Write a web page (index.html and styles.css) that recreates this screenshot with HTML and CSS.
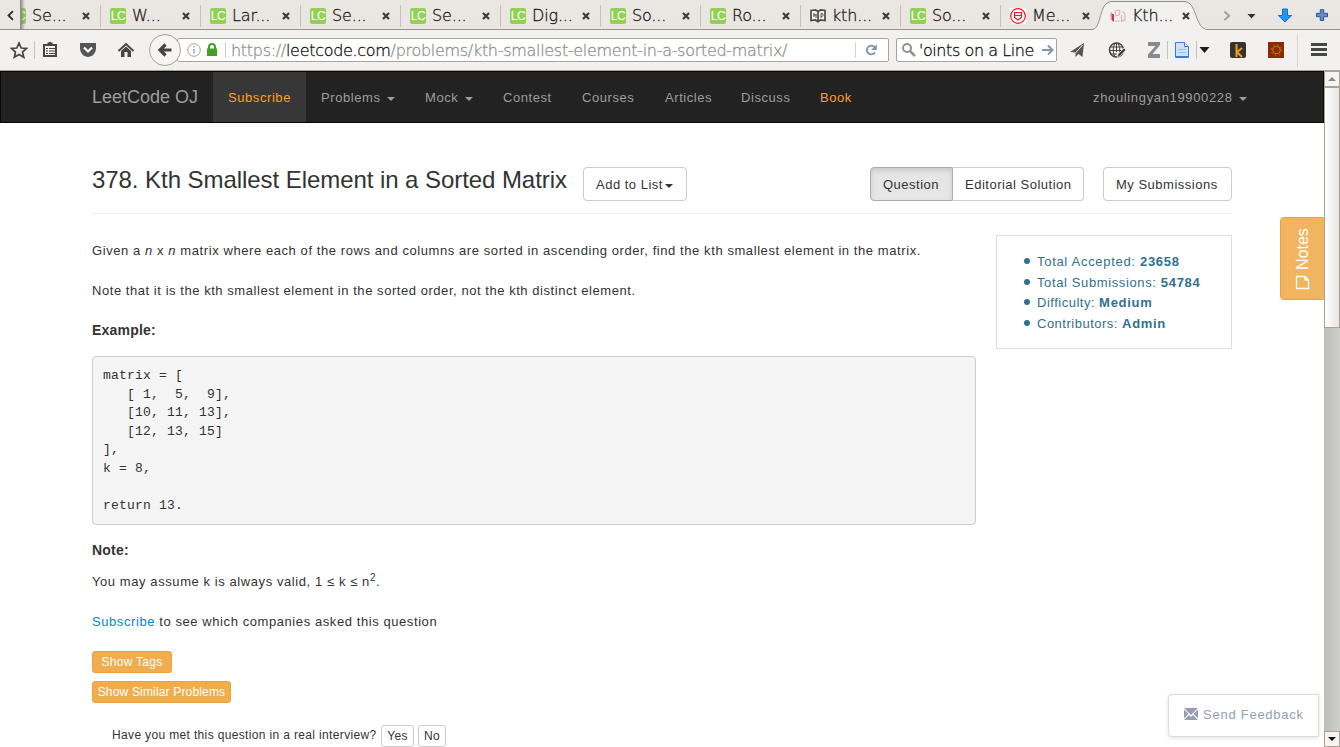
FILE: index.html
```html
<!DOCTYPE html>
<html lang="en">
<head>
<meta charset="utf-8">
<title>Kth Smallest Element in a Sorted Matrix | LeetCode OJ</title>
<link rel="stylesheet" href="styles.css">
</head>
<body>
<div class="browser">
<div class="tabs">
  <div class="tab first"><svg class="scroll-left" viewBox="0 0 20 30"><path d="M12.500 11.500L8 16l4.500 4.500" fill="none" stroke="#2e3436" stroke-width="2"/></svg><span class="shade"></span><i class="lc">LC</i><span class="t">Se...</span><svg class="x" viewBox="0 0 8 8"><path d="M1 1l6 6M7 1L1 7"/></svg></div>
  <div class="tab"><i class="lc">LC</i><span class="t">W...</span><svg class="x" viewBox="0 0 8 8"><path d="M1 1l6 6M7 1L1 7"/></svg></div>
  <div class="tab"><i class="lc">LC</i><span class="t">Lar...</span><svg class="x" viewBox="0 0 8 8"><path d="M1 1l6 6M7 1L1 7"/></svg></div>
  <div class="tab"><i class="lc">LC</i><span class="t">Se...</span><svg class="x" viewBox="0 0 8 8"><path d="M1 1l6 6M7 1L1 7"/></svg></div>
  <div class="tab"><i class="lc">LC</i><span class="t">Se...</span><svg class="x" viewBox="0 0 8 8"><path d="M1 1l6 6M7 1L1 7"/></svg></div>
  <div class="tab"><i class="lc">LC</i><span class="t">Dig...</span><svg class="x" viewBox="0 0 8 8"><path d="M1 1l6 6M7 1L1 7"/></svg></div>
  <div class="tab"><i class="lc">LC</i><span class="t">So...</span><svg class="x" viewBox="0 0 8 8"><path d="M1 1l6 6M7 1L1 7"/></svg></div>
  <div class="tab"><i class="lc">LC</i><span class="t">Ro...</span><svg class="x" viewBox="0 0 8 8"><path d="M1 1l6 6M7 1L1 7"/></svg></div>
  <div class="tab"><svg class="fav" viewBox="0 0 16 16"><path d="M1 2.500l4.500-.5L8 3.500 10.500 2l4.500.5v10L10.500 12 8 13.800 5.500 12 1 12.500zM8 3.500v10" fill="#f4f2ee" stroke="#4a4a4a" stroke-width="1.700"/><path d="M4 5v4M6 6v4M3.500 7h3M11 10V5.500q3 0 2 2t-2 1" fill="none" stroke="#555"/></svg><span class="t">kth...</span><svg class="x" viewBox="0 0 8 8"><path d="M1 1l6 6M7 1L1 7"/></svg></div>
  <div class="tab"><i class="lc">LC</i><span class="t">So...</span><svg class="x" viewBox="0 0 8 8"><path d="M1 1l6 6M7 1L1 7"/></svg></div>
  <div class="tab"><svg class="fav" viewBox="0 0 16 16"><rect width="16" height="16" fill="#fff"/><circle cx="8" cy="8" r="7.300" fill="#fff" stroke="#f5151b" stroke-width="1.200"/><path d="M4.500 4.500h7v5L8 12 4.500 9.500zM4.500 7.500h7" fill="none" stroke="#f5151b" stroke-width="1.200"/></svg><span class="t">Me...</span><svg class="x" viewBox="0 0 8 8"><path d="M1 1l6 6M7 1L1 7"/></svg></div>
  <div class="tab active"><svg class="shape" viewBox="0 0 120 30"><path d="M0 30V29.500C10 29.500 6 2.500 20 2.500H92C106 2.500 102 29.500 116 29.500V30z" fill="#f2f1ef"/><path d="M0 29.500C10 29.500 6 1.500 20 1.500H92C106 1.500 102 29.500 116 29.500" fill="none" stroke="#939388"/></svg><svg class="fav" viewBox="0 0 16 16"><path d="M1 5l3 1.500V14l-2.500-2z" fill="#c9364d"/><path d="M1 4v7M5 4q2-3 5-1l-1 4-3 1zM5 13h5M12 4q3 0 3 4v4q-2 1.500-3.500 1.500V7" fill="none" stroke="#e0b0b5" stroke-width="1.200"/></svg><span class="t">Kth...</span><svg class="x" viewBox="0 0 8 8"><path d="M1 1l6 6M7 1L1 7"/></svg></div>
  <svg class="tabtools" viewBox="1210 0 130 30"><path d="M1224.500 11.500l4.500 4.300-4.500 4.300" fill="none" stroke="#a3a09b" stroke-width="2"/><path d="M1247.500 14h8l-4 4.500z" fill="#2e3436"/><path d="M1282.500 9h5v6.500h4.200L1285 22l-6.700-6.500h4.200z" fill="#1f97f7" stroke="#1470c9"/><path d="M1320.300 9.700h3.400v3.600h3.800v3.400h-3.800v3.800h-3.400v-3.800h-3.800v-3.400h3.800z" fill="#638fc6" stroke="#2b5695"/></svg>
</div>
<div class="toolbar">
  <svg class="left-tools" viewBox="0 31 182 40"><path d="M19 43l2.200 5 5.300.5-4 3.600 1.300 5.200-4.800-2.800-4.700 2.800 1.200-5.200-4-3.600 5.300-.5z" fill="none" stroke="#464646" stroke-width="1.700"/><path d="M34.500 41v18" stroke="#c5c2bd"/><path d="M44 45h12v11H44zM47.500 43.500h5M50 42v2" fill="none" stroke="#464646" stroke-width="2"/><path d="M46 48.500h2M49 48.500h6M46 51h2M49 51h6M46 53.500h2M49 53.500h6" stroke="#464646"/><path d="M80 43h16v6q-1 7-8 8-7-1-8-8z" fill="#565656"/><path d="M84 47.500l4 4 4-4" fill="none" stroke="#fff" stroke-width="2.200"/><path d="M118.500 51l7.500-7 7.500 7" fill="none" stroke="#464646" stroke-width="1.800"/><path d="M121 51l5-4.500 5 4.500v6h-3.500v-5h-3v5H121z" fill="#464646"/></svg>
  <div class="url"><svg class="url-icons" viewBox="0 0 51 24"><circle cx="14" cy="12" r="6.300" fill="none" stroke="#a0a0a0"/><path d="M14 11v4.500M14 8v1.500" stroke="#999" stroke-width="1.300"/><path d="M29 11V9q0-3 3-3t3 3v2" fill="none" stroke="#459f26" stroke-width="2"/><rect x="27" y="10.500" width="10" height="7.500" fill="#459f26"/><path d="M45.500 4v16" stroke="#d0cecb"/></svg><span class="address">https://<b>leetcode.com</b>/problems/kth-smallest-element-in-a-sorted-matrix/</span><svg class="reload" viewBox="0 0 34 24"><path d="M.5 4v16" stroke="#d0cecb"/><path d="M20.500 14.500a4.500 4.500 0 1 1 .5-4" fill="none" stroke="#8296aa" stroke-width="2"/><path d="M22.500 6v6h-6z" fill="#8296aa"/></svg></div>
  <div class="search"><svg class="lens" viewBox="0 0 16 16"><circle cx="6" cy="6" r="4" fill="none" stroke="#929292" stroke-width="2"/><path d="M9 9l5 5" stroke="#929292" stroke-width="2.500"/></svg><span class="query">'oints on a Line</span><svg class="go" viewBox="0 0 14 14"><path d="M1 7h10M7 2.500L11.500 7 7 11.500" fill="none" stroke="#8296aa" stroke-width="2"/></svg></div>
  <svg class="right-tools" viewBox="1058 31 282 40"><path d="M1070 52l14-9-1.500 14-4-3-3 3v-4.500z" fill="#555"/><path d="M1075.500 53l7-8" stroke="#f2f1ef"/><circle cx="1116.500" cy="50" r="7" fill="none" stroke="#444" stroke-width="1.500"/><ellipse cx="1116.500" cy="50" rx="3.300" ry="7" fill="none" stroke="#444"/><path d="M1110 47h13M1110 50.500h13M1110 54h7M1116.500 43v9" stroke="#444"/><path d="M1117 58l1-4 6-6 2 2-6 6z" fill="#444" stroke="#f2f1ef" stroke-width=".7"/><path d="M1148 42h12v3l-7.500 9h7.500v4h-12v-3.500l7.500-8.500h-7.500z" fill="#878b90"/><path d="M1167.500 41v18M1196.500 41v18" stroke="#c5c2bd"/><path d="M1175.500 42.500h9l4 4v11h-13z" fill="#cce3ff" stroke="#3a7ad2"/><path d="M1184.500 42.500v4h4" fill="#fff" stroke="#3a7ad2"/><path d="M1178 49.500h8M1178 52.500h8" stroke="#9bbde8"/><path d="M1175 56.500h13.500" stroke="#3a7ad2"/><path d="M1199.500 47h10l-5 6z" fill="#1c1c1c"/><rect x="1230" y="42" width="16" height="16" rx="2" fill="#333"/><path d="M1236.500 44v13M1242 48l-5 4 5 5" fill="none" stroke="#f79a18" stroke-width="2"/><rect x="1268" y="42" width="16" height="16" fill="#8a2b06"/><circle cx="1276.500" cy="50" r="3.800" fill="none" stroke="#cb7a16"/><circle cx="1276.500" cy="50" r="5.300" fill="none" stroke="#cb7a16" stroke-dasharray="1.400 2.760"/><path d="M1297.500 34v33" stroke="#dad7d3"/><path d="M1311 44.500h16M1311 49.500h16M1311 54.500h16" stroke="#444944" stroke-width="3"/></svg>
  <div class="back"><svg viewBox="0 0 16 16"><path d="M14.500 8H4M8.500 2.500L3 8l5.500 5.500" fill="none" stroke="#464646" stroke-width="3.200"/></svg></div>
</div>
</div>
<div class="viewport">
<div class="page">
  <nav class="navbar">
    <span class="brand">LeetCode OJ</span>
    <span class="item on">Subscribe</span><span class="item">Problems <i class="caret"></i></span><span class="item mock">Mock <i class="caret"></i></span><span class="item contest">Contest</span><span class="item courses">Courses</span><span class="item articles">Articles</span><span class="item discuss">Discuss</span><span class="item book">Book</span>
    <span class="user">zhoulingyan19900228 <i class="caret"></i></span>
  </nav>
  <main class="container">
    <header class="heading">
      <h1>378. Kth Smallest Element in a Sorted Matrix</h1>
      <span class="btn add">Add to List<i class="caret"></i></span>
      <span class="btn question">Question</span><span class="btn editorial">Editorial Solution</span><span class="btn mine">My Submissions</span>
    </header>
    <div class="columns">
      <article class="content">
        <p class="given">Given a <em>n</em> x <em>n</em> matrix where each of the rows and columns are sorted in ascending order, find the kth smallest element in the matrix.</p>
        <p class="distinct">Note that it is the kth smallest element in the sorted order, not the kth distinct element.</p>
        <p class="strong">Example:</p>
<pre>matrix = [
   [ 1,  5,  9],
   [10, 11, 13],
   [12, 13, 15]
],
k = 8,

return 13.</pre>
        <p class="strong note">Note:</p>
        <p class="valid">You may assume k is always valid, 1 ≤ k ≤ n<sup>2</sup>.</p>
        <p class="companies"><a>Subscribe</a> to see which companies asked this question</p>
        <div class="tag tags">Show Tags</div>
        <div class="tag similar">Show Similar Problems</div>
        <div class="interview"><span class="ask">Have you met this question in a real interview?</span><span class="mini yes">Yes</span><span class="mini no">No</span></div>
      </article>
      <aside class="stats">
        <ul><li class="s1">Total Accepted: <b>23658</b></li><li class="s2">Total Submissions: <b>54784</b></li><li class="s3">Difficulty: <b>Medium</b></li><li class="s4">Contributors: <b>Admin</b></li></ul>
      </aside>
    </div>
  </main>
  <div class="notes"><span class="notes-label">Notes</span><svg viewBox="0 0 15 15"><path d="M1.500 1.500h8.500l3.500 3.500v8.500h-12zM10 1.500v3.500h3.500" fill="none" stroke="#fff" stroke-width="1.300"/></svg></div>
  <div class="feedback"><svg viewBox="0 0 14 12"><path d="M0 0h14L7 7zM0 1.500v9l4.500-4.700zM14 1.500v9L9.500 5.800zM0 12l5-5 2 2 2-2 5 5z" fill="#959fb1"/></svg><span>Send Feedback</span></div>
</div>
<div class="scrollbar"><div class="sb-btn up"><i></i></div><div class="thumb"></div><div class="sb-btn down"><i></i></div></div>
</div>
</body>
</html>
```
FILE: styles.css
```css
* { box-sizing: border-box; }
body { margin: 0; width: 1340px; height: 747px; overflow: hidden; font: 14px/20px "Liberation Sans", Arial, sans-serif; color: #333; background: #fff; }
svg { display: block; flex: none; }
.browser { height: 71px; background: #f2f1ef; border-bottom: 1px solid #aca192; font: 200 16px/20px "DejaVu Sans", sans-serif; -webkit-text-stroke: .3px; }
.tabs { display: flex; height: 30px; background: linear-gradient(#ebe8e4, #e9e6e1); border-bottom: 1px solid #939388; }
.tab { position: relative; display: flex; align-items: center; width: 100px; flex: none; height: 30px; padding: 2px 0 0 10px; color: #1c1c1c; }
.tab:not(.active)::after { content: ""; position: absolute; right: -1px; top: 5px; width: 1px; height: 22px; background: #c3c0bb; }
.tab:nth-child(11)::after { display: none; }
.lc { width: 16px; height: 16px; border-radius: 2px; background: #94cf5a; color: #fff; font: 12px/16px "Liberation Sans", sans-serif; letter-spacing: -.5px; text-align: center; flex: none; -webkit-text-stroke: 0; }
.fav { width: 16px; height: 16px; }
.t { width: 44px; margin-left: 6px; white-space: nowrap; position: relative; letter-spacing: -.15px; }
.x { width: 8px; height: 8px; margin-left: 6px; }
.x path { stroke: #403f3d; stroke-width: 2.300; }
.scroll-left { position: absolute; left: 0; top: 0; z-index: 2; width: 21px; height: 29px; background: #eae7e3; }
.shade { width: 5px; height: 30px; position: absolute; left: 20px; top: 0; z-index: 2; background: linear-gradient(90deg, #85827e, rgba(160,157,150,0)); }
.shape { position: absolute; left: -8px; top: 0; width: 120px; height: 30px; }
.active .fav, .active .x { position: relative; }
.tabtools { width: 130px; height: 30px; margin-left: 10px; }
.toolbar { position: relative; display: flex; height: 40px; align-items: flex-start; }
.left-tools { width: 182px; height: 40px; margin-top: 1px; margin-right: -5px; }
.url { display: flex; width: 712px; height: 24px; margin-top: 8px; border: 1px solid #aaa39a; border-radius: 2px; background: #fff; align-items: center; }
.url-icons { width: 51px; height: 24px; margin-left: 2px; }
.address { width: 624px; color: #8f8f8f; white-space: nowrap; letter-spacing: -.3px; padding-top: 1px; }
.address b { font-weight: 200; color: #111; }
.reload { width: 33px; height: 24px; }
.search { display: flex; width: 161px; height: 24px; margin: 8px 0 0 7px; padding-left: 4px; border: 1px solid #aaa39a; border-radius: 2px; background: #fff; align-items: center; }
.lens { width: 16px; height: 16px; }
.query { width: 122px; margin-left: 2px; color: #111; white-space: nowrap; letter-spacing: -.42px; padding-top: 1px; }
.go { width: 14px; height: 14px; }
.right-tools { width: 282px; height: 40px; margin-top: 1px; margin-left: 1px; }
.back { position: absolute; left: 149px; top: 4px; width: 32px; height: 32px; border: 1px solid #aca192; border-radius: 50%; background: #f6f5f3; padding: 7px; }
.back svg { width: 16px; height: 16px; }
.viewport { display: flex; height: 676px; }
.page { position: relative; width: 1324px; overflow: hidden; }
.navbar { display: flex; height: 52px; background: #222; border: 1px solid #080808; color: #9d9d9d; line-height: 52px; padding-left: 91px; font-size: 13px; white-space: nowrap; }
.brand { width: 121px; font-size: 18px; line-height: 50px; }
.item { width: 104px; height: 50px; padding-left: 15px; letter-spacing: .57px; }
.item.on { width: 93px; background: #373737; color: #ffa116; }
.mock { width: 78px; } .contest { width: 79px; } .courses { width: 83px; } .articles { width: 76px; } .discuss { width: 79px; } .book { width: 120px; color: #f5a12c; }
.user { margin-left: auto; width: 230px; letter-spacing: .65px; }
.caret { display: inline-block; border: 4px solid transparent; border-top-color: currentColor; border-bottom: 0; vertical-align: middle; margin-left: 2px; }
.container { padding: 44px 92px 0; }
.heading { display: flex; height: 47px; border-bottom: 1px solid #eee; white-space: nowrap; }
h1 { margin: 0; width: 491px; font: 24px/26px "Liberation Sans", sans-serif; letter-spacing: -.06px; }
.btn { height: 34px; padding: 6px 12px; border: 1px solid #ccc; border-radius: 4px; font-size: 13px; line-height: 22px; letter-spacing: .5px; flex: none; }
.add { width: 104px; } .question { width: 83px; margin-left: 183px; border-color: #adadad; border-radius: 4px 0 0 4px; background: #e6e6e6; box-shadow: inset 0 3px 5px rgba(0,0,0,.125); }
.editorial { width: 131px; border-left: 0; border-radius: 0 4px 4px 0; } .mine { width: 129px; margin-left: 19px; }
.columns { display: flex; }
.content { width: 884px; padding-top: 27px; font-size: 13px; }
p { margin: 0 0 20px; height: 20px; white-space: nowrap; letter-spacing: .58px; }
.distinct { margin-bottom: 19px; letter-spacing: .55px; }
.strong { font-weight: 700; margin-bottom: 16px; font-size: 14px; letter-spacing: .2px; }
pre { height: 169px; margin: 0; padding: 10px; border: 1px solid #ccc; border-radius: 4px; background: #f5f5f5; font: 13px/18.570px "Liberation Mono", monospace; letter-spacing: .2px; }
.note { margin-top: 15px; margin-bottom: 12px; }
sup { font-size: 10px; line-height: 0; vertical-align: 5px; }
a { color: #08c; }
.companies { margin-bottom: 19px; }
.tag { width: 80px; height: 22px; margin-bottom: 8px; border: 1px solid #eea236; border-radius: 3px; background: #f0ad4e; color: #fff; font-size: 12px; line-height: 20px; text-align: center; letter-spacing: .3px; white-space: nowrap; }
.similar { width: 139px; letter-spacing: .17px; }
.interview { display: flex; align-items: center; height: 22px; margin: 22px 0 0 20px; font-size: 12px; letter-spacing: .35px; white-space: nowrap; }
.ask { width: 269px; position: relative; top: -1px; }
.mini { width: 33px; height: 22px; border: 1px solid #ccc; border-radius: 3px; text-align: center; line-height: 20px; margin-right: 4px; }
.no { width: 28px; }
.stats { width: 236px; height: 114px; margin: 21px 0 0 20px; border: 1px solid #ddd; color: #31708f; font-size: 13px; line-height: 20.570px; }
.stats ul { list-style: none; margin: 16px 0 0; padding: 0 0 0 40px; letter-spacing: .5px; white-space: nowrap; }
.stats .s1 { letter-spacing: .7px; } .stats .s2 { letter-spacing: .62px; }
.stats b { letter-spacing: .7px; }
.stats li::before { content: ""; float: left; width: 6px; height: 6px; margin: 6px 0 0 -13px; border-radius: 50%; background: #31708f; }
.notes { position: absolute; left: 1280px; top: 146px; width: 46px; height: 83px; border: 1px solid #eea236; border-radius: 4px; background: #f1b45f; color: #fff; display: flex; flex-direction: column; align-items: center; padding: 9px 1px 0 0; }
.notes-label { writing-mode: vertical-rl; transform: rotate(180deg); height: 43px; font-size: 16px; line-height: 20px; }
.notes svg { width: 15px; height: 15px; margin-top: 5px; }
.feedback { position: absolute; left: 1168px; top: 623px; width: 151px; height: 43px; border: 1px solid #ddd; border-radius: 4px 0 0 4px; background: #fff; box-shadow: 0 1px 4px rgba(0,0,0,.12); color: #959fb1; display: flex; align-items: center; padding-left: 15px; padding-bottom: 2px; white-space: nowrap; font-size: 13px; letter-spacing: .75px; }
.feedback svg { width: 14px; height: 12px; margin-right: 5px; position: relative; top: -1px; }
.scrollbar { width: 16px; display: flex; flex-direction: column; background: linear-gradient(90deg, #bdbeb9, #cfcfcd); }
.sb-btn { height: 16px; border: 1px solid #aca192; background: #f6f4f1; display: flex; align-items: center; justify-content: center; }
.sb-btn i { border: 4px solid transparent; border-top: 4px solid #111; border-bottom: 0; }
.up i { border-top: 0; border-bottom: 4px solid #888; }
.thumb { height: 241px; border: 1px solid #aca192; background: linear-gradient(90deg, #fff, #e9e6e1); }
.down { margin-top: auto; }
```
